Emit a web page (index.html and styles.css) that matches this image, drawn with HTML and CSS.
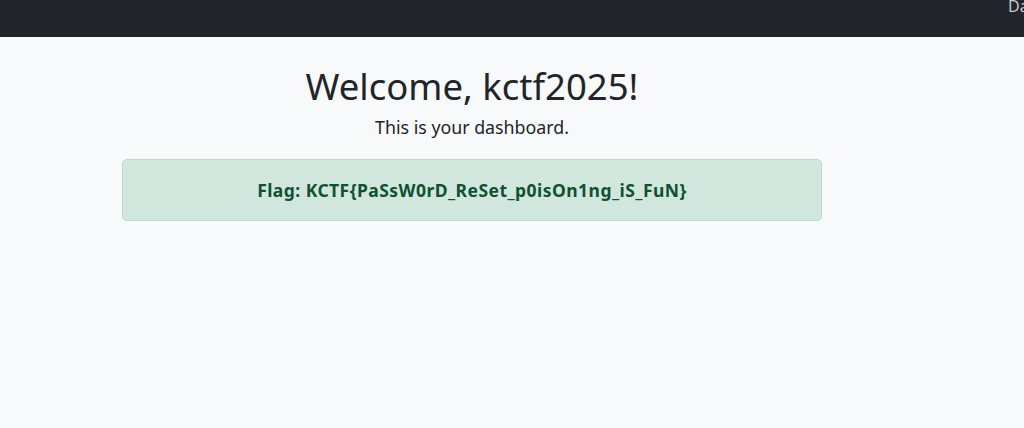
FILE: index.html
```html
<!DOCTYPE html>
<html lang="en">
<head>
<meta charset="utf-8">
<title>Dashboard</title>
<link rel="stylesheet" href="styles.css">
</head>
<body>
<nav class="navbar">
  <a class="nav-link" href="#">Dashboard</a>
</nav>
<div class="page">
  <main class="content">
    <h1 class="title">Welcome, kctf2025!</h1>
    <p class="lead">This is your dashboard.</p>
    <div class="alert">Flag: KCTF{PaSsW0rD_ReSet_p0isOn1ng_iS_FuN}</div>
  </main>
</div>
</body>
</html>
```
FILE: styles.css
```css
html, body {
  margin: 0;
  padding: 0;
}
body {
  background: #f8f9fa;
  color: #212529;
  font-family: "Noto Sans", "Open Sans", sans-serif;
  overflow: hidden;
}
.navbar {
  height: 37px;
  background: #212529;
  display: flex;
  justify-content: flex-start;
  overflow: hidden;
  white-space: nowrap;
}
.nav-link {
  margin-left: 1008px;
  margin-top: -4px;
  font-size: 16px;
  line-height: 20px;
  color: #c8c9ca;
  text-decoration: none;
}
.page {
  width: 944px;
}
.content {
  width: 700px;
  margin: 0 auto;
  text-align: center;
}
.title {
  margin: 25px 0 0;
  font-size: 36.5px;
  font-weight: 400;
  line-height: 48px;
}
.lead {
  margin: 4px 0 0;
  font-size: 17.8px;
  line-height: 26px;
}
.alert {
  margin-top: 19px;
  height: 62px;
  box-sizing: border-box;
  border: 1px solid #badbcc;
  border-radius: 5px;
  background: #d1e7dd;
  color: #0f5132;
  font-size: 17.5px;
  letter-spacing: 0.45px;
  font-weight: 700;
  display: flex;
  align-items: center;
  justify-content: center;
}
```
